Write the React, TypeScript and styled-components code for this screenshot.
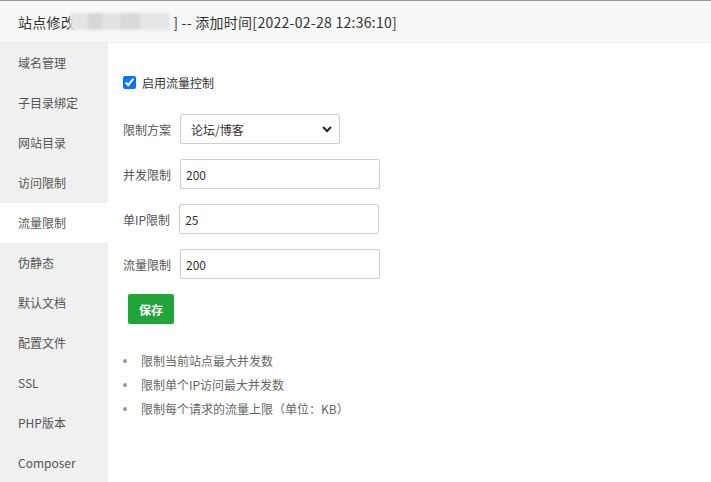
import React from "react";
import styled, { createGlobalStyle } from "styled-components";

const GlobalStyle = createGlobalStyle`
  html, body {
    margin: 0;
    padding: 0;
    background: #fff;
  }
  body {
    font-family: "Noto Sans CJK SC", "Noto Sans", sans-serif;
    color: #333;
  }
`;

const MENU = [
  "域名管理",
  "子目录绑定",
  "网站目录",
  "访问限制",
  "流量限制",
  "伪静态",
  "默认文档",
  "配置文件",
  "SSL",
  "PHP版本",
  "Composer",
];

const FIELDS = [
  { label: "并发限制", value: "200" },
  { label: "单IP限制", value: "25" },
  { label: "流量限制", value: "200" },
];

const TIPS = [
  "限制当前站点最大并发数",
  "限制单个IP访问最大并发数",
  "限制每个请求的流量上限（单位：KB）",
];

const Page = styled.div`
  width: 711px;
  height: 482px;
  overflow: hidden;
  border-top: 1px solid #999;
  box-sizing: border-box;
  display: flex;
  flex-direction: column;
`;

const TitleBar = styled.div`
  height: 41px;
  flex: none;
  background: #f8f8f8;
  border-bottom: 1px solid #eee;
  display: flex;
  align-items: center;
  padding-left: 18px;
  font-size: 14px;
  letter-spacing: 0.28px;
  color: #333;
  white-space: nowrap;
`;

const Blurred = styled.span`
  display: inline-block;
  width: 100px;
  height: 17px;
  margin-left: -5px;
  margin-right: 3px;
  background: linear-gradient(
    90deg,
    #e4e4e4 0 18%,
    #d6d6d6 18% 32%,
    #e2e2e2 32% 50%,
    #d9d9d9 50% 70%,
    #e6e6e6 70% 100%
  );
  filter: blur(1.5px);
`;

const Body = styled.div`
  flex: 1;
  display: flex;
  min-height: 0;
`;

const Sidebar = styled.ul`
  width: 108px;
  flex: none;
  margin: 0;
  padding: 0;
  list-style: none;
  background: #f0f0f0;
`;

const MenuItem = styled.li<{ $active?: boolean }>`
  height: 40px;
  line-height: 40px;
  padding-left: 18px;
  font-size: 12px;
  color: #555;
  background: ${(p) => (p.$active ? "#fff" : "transparent")};
`;

const Content = styled.div`
  flex: 1;
  padding: 0 15px;
  font-size: 12px;
`;

const CheckRow = styled.label`
  display: flex;
  align-items: center;
  gap: 6px;
  height: 16px;
  margin-top: 31px;
  color: #333;
`;

const Check = styled.input`
  width: 13px;
  height: 13px;
  margin: 0;
  accent-color: #0075ff;
`;

const FormRow = styled.div<{ $first?: boolean }>`
  display: flex;
  align-items: center;
  gap: 9px;
  margin-top: ${(p) => (p.$first ? "24px" : "15px")};
  color: #555;
`;

const SelectWrap = styled.div`
  position: relative;
  width: 160px;
  height: 30px;
`;

const Select = styled.select`
  appearance: none;
  width: 100%;
  height: 100%;
  border: 1px solid #ccc;
  border-radius: 2px;
  background: #fff;
  padding: 0 10px;
  font-family: inherit;
  font-size: 12px;
  color: #333;
  outline: none;
`;

const Chevron = styled.svg`
  position: absolute;
  right: 8px;
  top: 12px;
  pointer-events: none;
`;

const TextInput = styled.input`
  width: 200px;
  height: 30px;
  box-sizing: border-box;
  border: 1px solid #ccc;
  border-radius: 2px;
  padding: 0 5px;
  font-family: inherit;
  font-size: 12px;
  color: #333;
  outline: none;
`;

const SaveButton = styled.button`
  margin: 15px 0 0 5px;
  width: 46px;
  height: 30px;
  border: none;
  border-radius: 2px;
  background: #20a53a;
  color: #fff;
  font-family: inherit;
  font-size: 12px;
  font-weight: bold;
  cursor: pointer;
`;

const Tips = styled.ul`
  margin: 25px 0 0;
  padding: 0;
  list-style: none;
`;

const Tip = styled.li`
  position: relative;
  height: 24px;
  line-height: 24px;
  padding-left: 18px;
  color: #666;
  font-size: 12px;

  &::before {
    content: "";
    position: absolute;
    left: 0;
    top: 10px;
    width: 4px;
    height: 4px;
    border-radius: 50%;
    background: #999;
  }
`;

export default function App() {
  return (
    <>
      <GlobalStyle />
      <Page>
        <TitleBar>
          站点修改<Blurred />] -- 添加时间[2022-02-28 12:36:10]
        </TitleBar>
        <Body>
          <Sidebar>
            {MENU.map((m) => (
              <MenuItem key={m} $active={m === "流量限制"}>
                {m}
              </MenuItem>
            ))}
          </Sidebar>
          <Content>
            <CheckRow>
              <Check type="checkbox" defaultChecked />
              启用流量控制
            </CheckRow>
            <FormRow $first>
              <span>限制方案</span>
              <SelectWrap>
                <Select defaultValue="bbs">
                  <option value="bbs">论坛/博客</option>
                </Select>
                <Chevron width="10" height="7" viewBox="0 0 10 7">
                  <polyline
                    points="1,1 5,5 9,1"
                    fill="none"
                    stroke="#222"
                    strokeWidth="2"
                  />
                </Chevron>
              </SelectWrap>
            </FormRow>
            {FIELDS.map((f) => (
              <FormRow key={f.label}>
                <span>{f.label}</span>
                <TextInput defaultValue={f.value} />
              </FormRow>
            ))}
            <SaveButton>保存</SaveButton>
            <Tips>
              {TIPS.map((t) => (
                <Tip key={t}>{t}</Tip>
              ))}
            </Tips>
          </Content>
        </Body>
      </Page>
    </>
  );
}
